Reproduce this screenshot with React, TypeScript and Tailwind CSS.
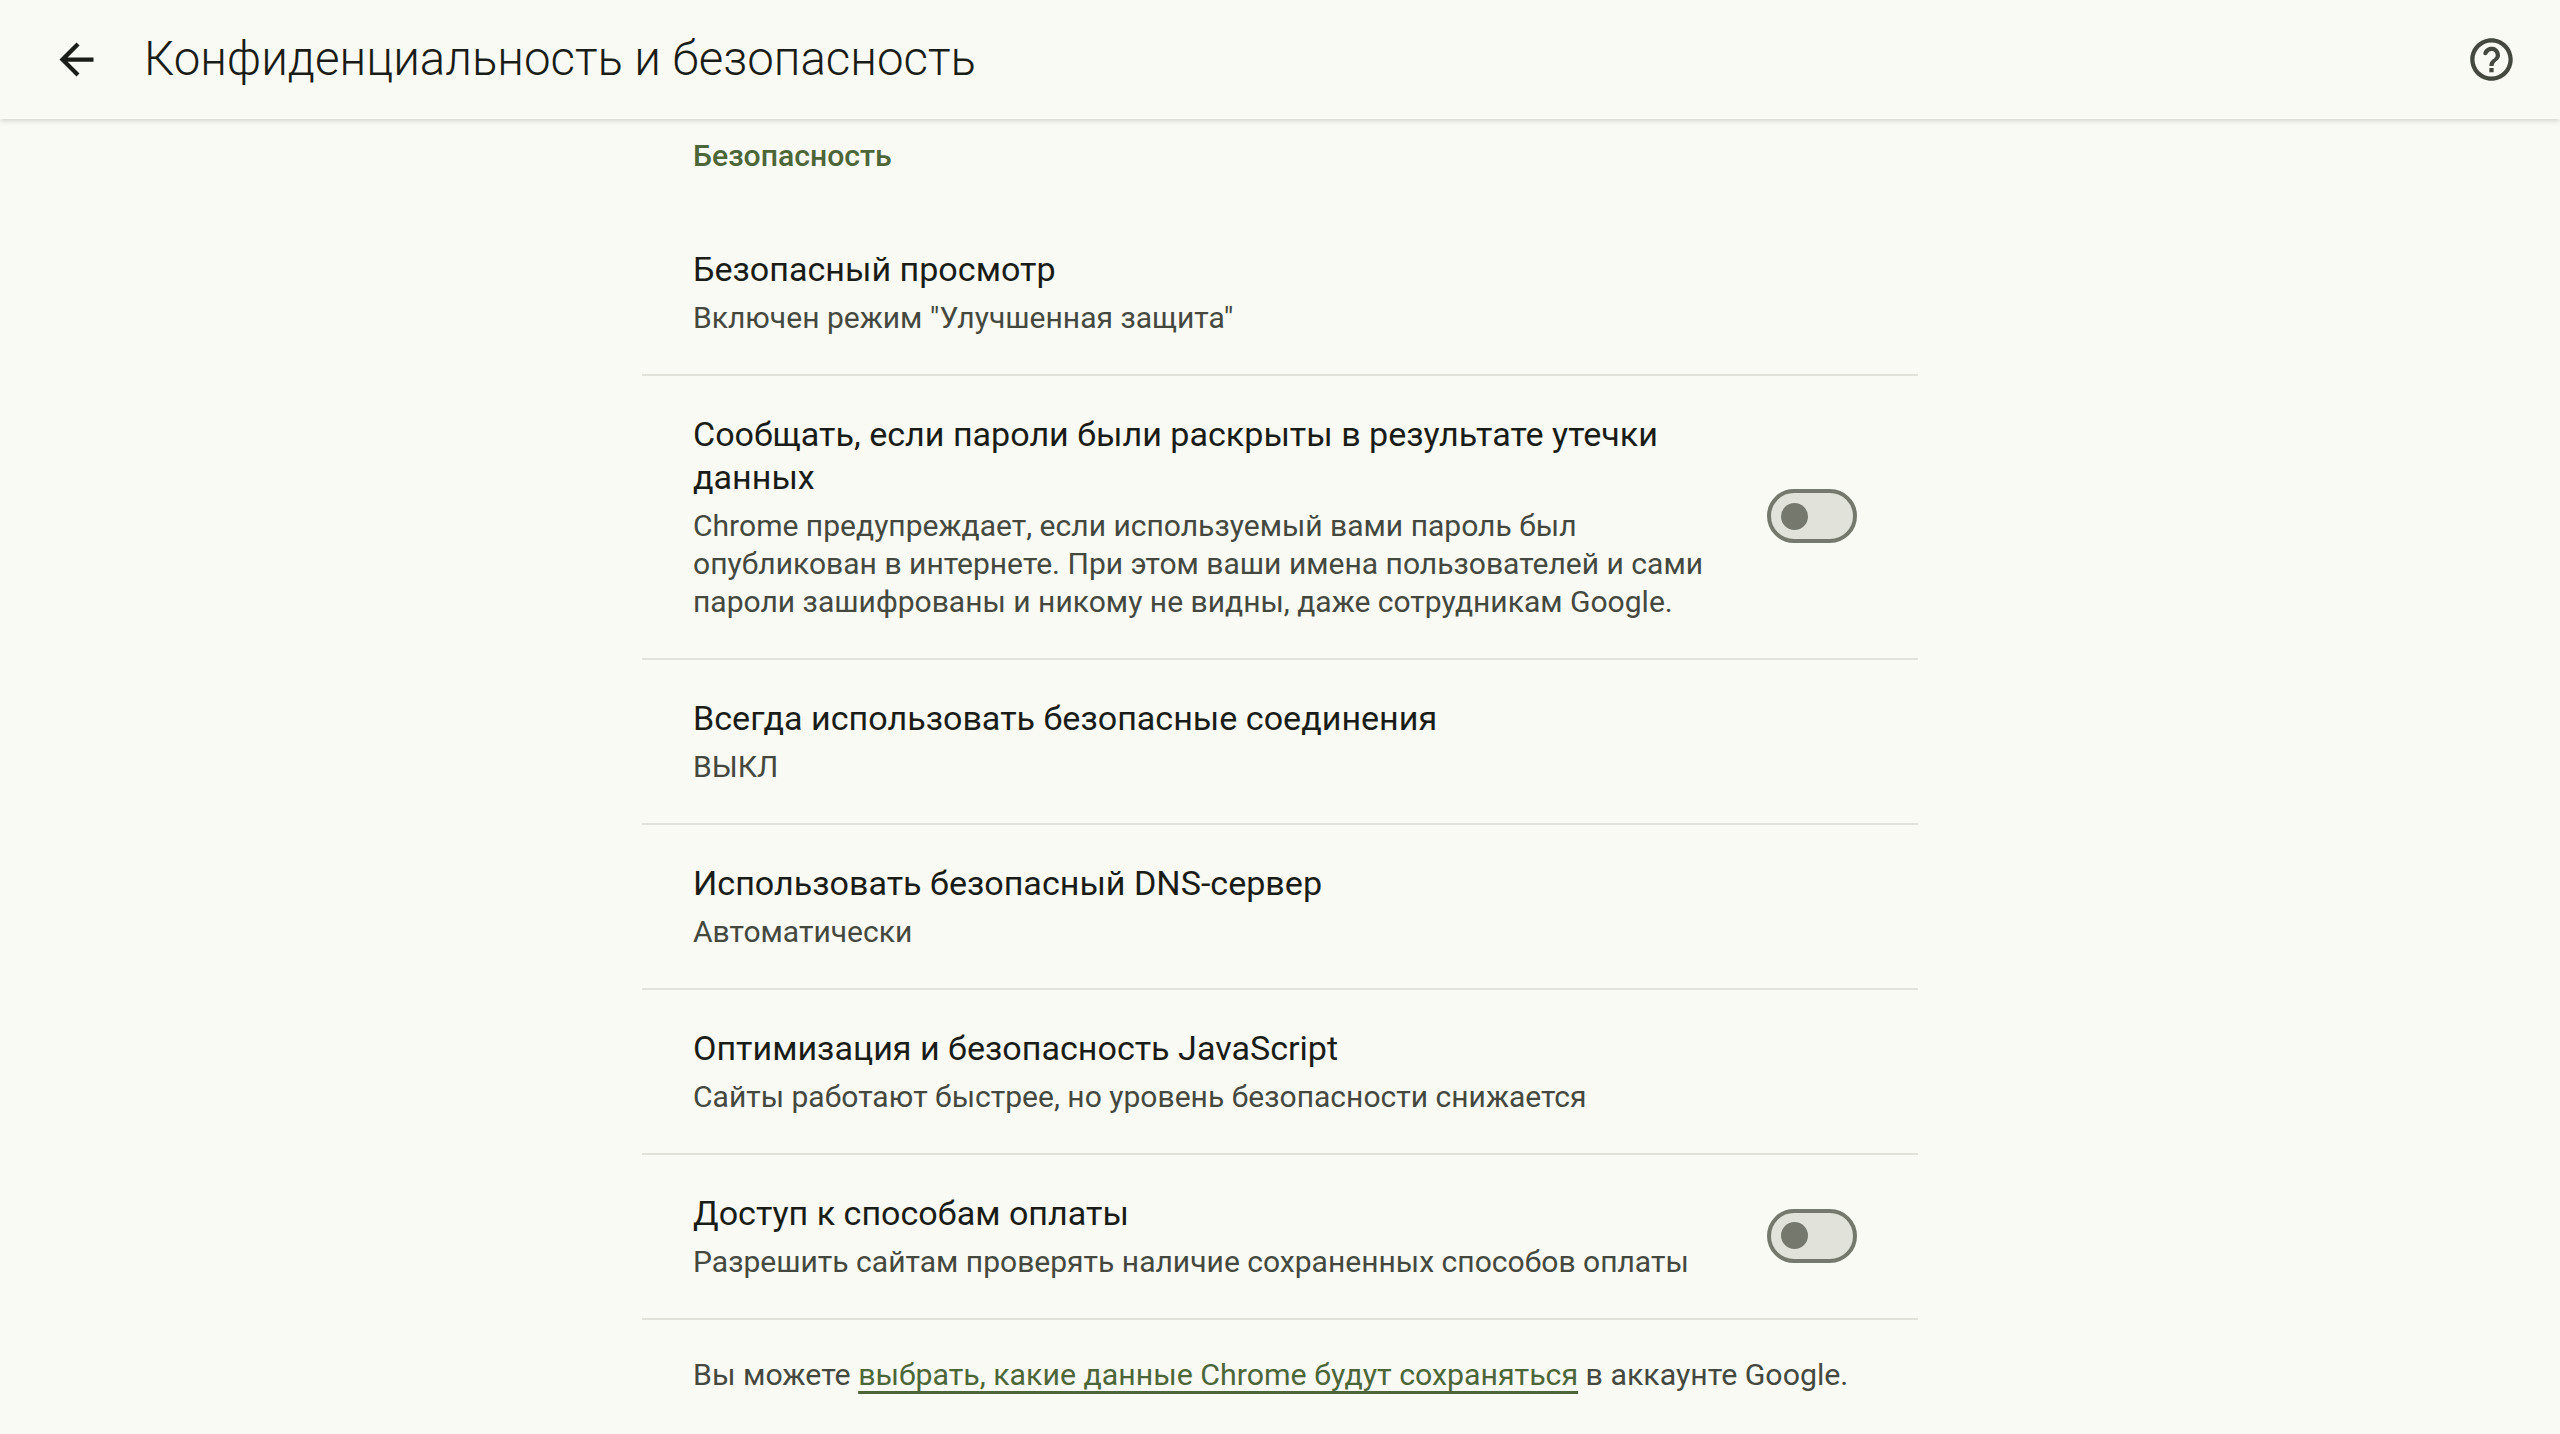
interface Row {
  title: string;
  sub: string;
  toggle?: boolean;
}

const rows: Row[] = [
  { title: 'Безопасный просмотр', sub: 'Включен режим "Улучшенная защита"' },
  {
    title: 'Сообщать, если пароли были раскрыты в результате утечки данных',
    sub: 'Chrome предупреждает, если используемый вами пароль был опубликован в интернете. При этом ваши имена пользователей и сами пароли зашифрованы и никому не видны, даже сотрудникам Google.',
    toggle: true,
  },
  { title: 'Всегда использовать безопасные соединения', sub: 'ВЫКЛ' },
  { title: 'Использовать безопасный DNS-сервер', sub: 'Автоматически' },
  { title: 'Оптимизация и безопасность JavaScript', sub: 'Сайты работают быстрее, но уровень безопасности снижается' },
  { title: 'Доступ к способам оплаты', sub: 'Разрешить сайтам проверять наличие сохраненных способов оплаты', toggle: true },
];

function Toggle() {
  return (
    <div className="mb-[2px] flex h-[54px] w-[90px] shrink-0 items-center rounded-full border-[4px] border-[#74786d] bg-[#e1e3db] pl-[10px]">
      <div className="h-[27px] w-[27px] rounded-full bg-[#74786d]" />
    </div>
  );
}

export default function App() {
  return (
    <div className="flex h-[1434px] flex-col overflow-hidden bg-[#f9faf3] font-['Roboto',sans-serif]">
      {/* Toolbar */}
      <header className="flex h-[119px] shrink-0 items-center justify-between pl-[51px] pr-[43px] shadow-[0_2px_5px_rgba(0,0,0,0.15)]">
        <div className="flex items-center gap-[42px]">
          <svg viewBox="0 0 24 24" className="h-[51px] w-[51px] fill-[#1a1c18]">
            <path d="M20 11H7.83l5.59-5.59L12 4l-8 8 8 8 1.41-1.41L7.83 13H20v-2z" />
          </svg>
          <h1 className="mb-[2px] text-[47.4px] font-light leading-[56px] text-[#1a1c18]">Конфиденциальность и безопасность</h1>
        </div>
        <svg viewBox="0 0 24 24" className="h-[51px] w-[51px] fill-[#44483f]">
          <path d="M12 2C6.48 2 2 6.48 2 12s4.48 10 10 10 10-4.48 10-10S17.52 2 12 2zm0 18c-4.41 0-8-3.59-8-8s3.59-8 8-8 8 3.59 8 8-3.59 8-8 8zm-1-4h2v2h-2zm1.61-9.96c-2.06-.3-3.88.97-4.43 2.79-.18.58.26 1.17.87 1.17h.2c.41 0 .74-.29.88-.67.32-.89 1.27-1.5 2.3-1.28.95.2 1.65 1.13 1.57 2.1-.1 1.34-1.62 1.63-2.45 2.88 0 .01-.01.01-.01.02-.01.02-.02.03-.03.05-.09.15-.18.32-.25.5-.01.03-.03.05-.04.08-.01.02-.01.04-.02.07-.12.34-.2.75-.2 1.25h2c0-.42.11-.77.28-1.07.02-.03.03-.06.05-.09.08-.14.18-.27.28-.39.01-.01.02-.03.03-.04.1-.12.21-.23.33-.34.96-.91 2.26-1.65 1.99-3.56-.24-1.74-1.61-3.21-3.35-3.47z" />
        </svg>
      </header>

      <main className="mx-auto flex w-[1276px] flex-col">
        <h2 className="pl-[51px] pt-[17px] text-[30.2px] font-medium leading-[40px] text-[#4c6639]">Безопасность</h2>
        <div className="mt-[35px] flex flex-col">
          {rows.map((row) => (
            <div
              key={row.title}
              className="flex items-center justify-between gap-[60px] border-b-2 border-[#e1e3db] py-[37px] pl-[51px] pr-[61px]"
            >
              <div className="min-w-0 flex-1">
                <div className="text-[34.1px] leading-[43px] text-[#1a1c18]">{row.title}</div>
                <div className="mt-[8px] text-[30.05px] leading-[38px] text-[#44483f]">{row.sub}</div>
              </div>
              {row.toggle && <Toggle />}
            </div>
          ))}
        </div>
        <p className="pl-[51px] pt-[35px] text-[30.3px] leading-[40px] text-[#44483f]">
          Вы можете{' '}
          <a className="text-[#4c6639] underline decoration-[2.5px] underline-offset-[6px] [text-decoration-skip-ink:none]">
            выбрать, какие данные Chrome будут сохраняться
          </a>{' '}
          в аккаунте Google.
        </p>
      </main>
    </div>
  );
}
